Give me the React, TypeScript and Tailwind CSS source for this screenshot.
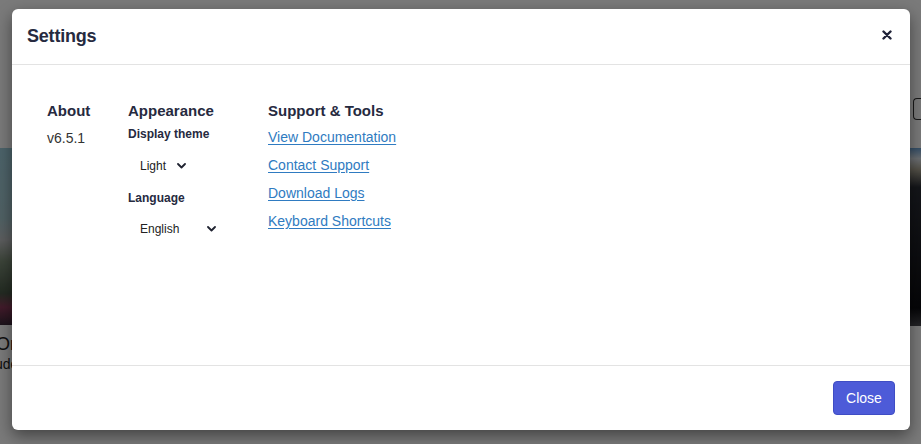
import React from "react";

const font = { fontFamily: '"Liberation Sans", Arial, sans-serif' };

function Chevron() {
  return (
    <svg width="9" height="6" viewBox="0 0 9 6" className="text-[#1f2230]">
      <path d="M1 1 L4.5 4.5 L8 1" fill="none" stroke="currentColor" strokeWidth="1.8" strokeLinecap="round" strokeLinejoin="round" />
    </svg>
  );
}

function Select({ label, width }: { label: string; width: string }) {
  return (
    <div className={`flex items-center justify-between pl-3 pr-1 h-[28px] text-[12px] text-[#222] ${width}`}>
      <span>{label}</span>
      <Chevron />
    </div>
  );
}

export default function App() {
  const links = ["View Documentation", "Contact Support", "Download Logs", "Keyboard Shortcuts"];
  return (
    <div className="relative w-[921px] h-[444px] overflow-hidden bg-white" style={font}>
      {/* background app */}
      <div className="flex justify-between pt-[148px]">
        <div className="flex flex-col">
          <div className="w-[12px] h-[177px] bg-[linear-gradient(180deg,#9fd0de_0%,#a8cad2_40%,#c0c2c4_52%,#7d8e78_64%,#4a5a48_82%,#8a3a5a_90%,#3a2838_100%)]" />
          <div className="text-[18px] text-[#222] leading-[22px] mt-[8px] -ml-[4px]">Or</div>
          <div className="text-[14px] text-[#222] leading-[18px] -ml-[5px]">ude</div>
        </div>
        <div className="flex flex-col items-end -mt-[50px]">
          <div className="w-[8px] h-[22px] border border-[#333] border-r-0 rounded-l-sm mb-[28px]" />
          <div className="w-[11px] h-[178px] bg-[linear-gradient(180deg,#6fa6d8_0%,#dfe6ee_6%,#b0aa98_12%,#2b2e36_22%,#1b1c22_60%,#0c0c10_90%,#4a4a50_100%)]" />
        </div>
      </div>

      {/* overlay */}
      <div className="absolute inset-0 bg-[rgba(0,0,0,0.52)]" />

      {/* modal */}
      <div className="absolute left-[12px] top-[9px] w-[898px] h-[421px] bg-white rounded-[6px] shadow-[0_6px_16px_rgba(0,0,0,0.45)] flex flex-col">
        <div className="flex items-center justify-between h-[56px] pl-[15px] pr-[13px] border-b border-[#e3e3e3]">
          <h2 className="text-[18px] font-semibold text-[#262a40] tracking-[-0.2px]">Settings</h2>
          <button className="w-[20px] h-[20px] -mt-[3px] flex items-center justify-center text-[#1f2238]">
            <svg width="10" height="10" viewBox="0 0 10 10">
              <path d="M1.5 1.5 L8.5 8.5 M8.5 1.5 L1.5 8.5" stroke="currentColor" strokeWidth="2.4" strokeLinecap="round" />
            </svg>
          </button>
        </div>

        <div className="flex-1 flex pl-[35px] pt-[37px]">
          <div className="w-[81px] flex flex-col">
            <h3 className="text-[15px] font-semibold text-[#262a40] leading-[18px]">About</h3>
            <div className="text-[14px] text-[#333] mt-[9px] leading-[18px]">v6.5.1</div>
          </div>
          <div className="w-[140px] flex flex-col">
            <h3 className="text-[15px] font-semibold text-[#262a40] leading-[18px]">Appearance</h3>
            <label className="text-[12px] font-semibold text-[#262a40] mt-[7px] leading-[15px]">Display theme</label>
            <div className="mt-[10px]">
              <Select label="Light" width="w-[62px]" />
            </div>
            <label className="text-[12px] font-semibold text-[#262a40] mt-[11px] leading-[15px]">Language</label>
            <div className="mt-[9px]">
              <Select label="English" width="w-[92px]" />
            </div>
          </div>
          <div className="flex flex-col">
            <h3 className="text-[15px] font-semibold text-[#262a40] leading-[18px]">Support &amp; Tools</h3>
            <div className="flex flex-col mt-[9px] gap-[11px]">
              {links.map((l) => (
                <a key={l} href="#" className="text-[14px] leading-[17px] text-[#2f7bc1] underline underline-offset-2">
                  {l}
                </a>
              ))}
            </div>
          </div>
        </div>

        <div className="h-[65px] border-t border-[#e3e3e3] flex items-center justify-end px-[15px]">
          <button className="w-[62px] h-[34px] rounded-[4px] bg-[#4d5bd8] border border-[#3f4dc4] text-white text-[14px]">
            Close
          </button>
        </div>
      </div>
    </div>
  );
}
